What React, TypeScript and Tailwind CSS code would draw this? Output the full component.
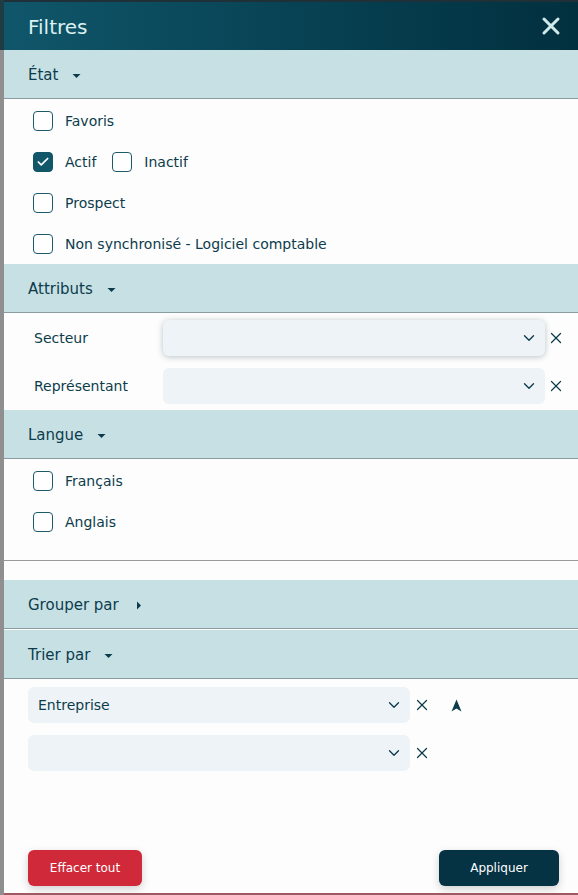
import { ChevronDown, X, Check } from 'lucide-react';

const FONT = { fontFamily: '"DejaVu Sans", Verdana, sans-serif' };

function Caret({ right }: { right?: boolean }) {
  return right ? (
    <svg width="6" height="9" viewBox="0 0 6 9" className="ml-[17px]">
      <path d="M1 0.5 L5 4.5 L1 8.5 Z" fill="#0c3c4c" />
    </svg>
  ) : (
    <svg width="9" height="6" viewBox="0 0 9 6" className="ml-[14px]">
      <path d="M0.5 1 L8.5 1 L4.5 5 Z" fill="#0c3c4c" />
    </svg>
  );
}

function SectionHeader({ title, open = true }: { title: string; open?: boolean }) {
  return (
    <div className="h-[49px] shrink-0 flex items-center pl-6 pt-[3px] bg-[#c7e0e4] border-b border-[#8a9ca2] text-[15px] text-[#0c3c4c]">
      <span>{title}</span>
      <Caret right={!open} />
    </div>
  );
}

function Box({ label, checked }: { label: string; checked?: boolean }) {
  return (
    <label className="flex items-center gap-3 h-[41px]">
      <span
        className={
          checked
            ? 'w-5 h-5 rounded-[4px] bg-[#12566a] border-[1.5px] border-[#12566a] flex items-center justify-center'
            : 'w-5 h-5 rounded-[4px] border-[1.5px] border-[#1d5a6c] bg-white'
        }
      >
        {checked && <Check size={14} strokeWidth={3} color="#ffffff" />}
      </span>
      <span className="text-[14px] text-[#0c3c4c] pt-[2px]">{label}</span>
    </label>
  );
}

function Select({ value, focused, className }: { value?: string; focused?: boolean; className?: string }) {
  return (
    <div
      className={
        'h-9 rounded-[6px] bg-[#eef3f7] flex items-center justify-between pl-[10px] pr-[7px] text-[14px] text-[#0c3c4c] ' +
        (focused ? 'shadow-[0_1px_6px_rgba(30,60,70,0.3)] ' : '') +
        (className || '')
      }
    >
      <span className="pt-[1px]">{value}</span>
      <ChevronDown size={18} strokeWidth={1.8} color="#0c3c4c" />
    </div>
  );
}

function Clear() {
  return <X size={18} strokeWidth={1.6} color="#0c3c4c" className="shrink-0" />;
}

export default function App() {
  return (
    <div className="flex h-[895px] w-[578px] overflow-hidden bg-white" style={FONT}>
      {/* background page peeking out */}
      <div className="w-[4px] shrink-0 flex flex-col">
        <div className="h-[50px] bg-[#1f3c44]" />
        <div className="flex-1 bg-[#8f8f8f]" />
      </div>

      <div className="flex-1 flex flex-col bg-[#fdfdfd]">
        {/* Header */}
        <div className="h-[50px] shrink-0 flex items-center justify-between pl-6 pr-[13px] border-t-2 border-[#1f3038] bg-gradient-to-r from-[#10566a] to-[#02303f]">
          <span className="text-[20px] text-[#dcf0f2] leading-none pt-[2px]">Filtres</span>
          <X size={28} strokeWidth={2.6} color="#d2e9ec" />
        </div>

        {/* État */}
        <SectionHeader title="État" />
        <div className="pl-[29px] pt-[1px]">
          <Box label="Favoris" />
          <div className="flex items-center gap-4">
            <Box label="Actif" checked />
            <Box label="Inactif" />
          </div>
          <Box label="Prospect" />
          <Box label="Non synchronisé - Logiciel comptable" />
        </div>

        {/* Attributs */}
        <SectionHeader title="Attributs" />
        <div className="pl-[30px] pr-[13px] pt-[7px] pb-[6px] flex flex-col gap-3">
          <div className="flex items-center">
            <span className="w-[129px] text-[14px] text-[#0c3c4c] pt-[1px]">Secteur</span>
            <Select focused className="flex-1 mr-[2px]" />
            <Clear />
          </div>
          <div className="flex items-center">
            <span className="w-[129px] text-[14px] text-[#0c3c4c] pt-[1px]">Représentant</span>
            <Select className="flex-1 mr-[2px]" />
            <Clear />
          </div>
        </div>

        {/* Langue */}
        <SectionHeader title="Langue" />
        <div className="pl-[29px] pt-[1px] h-[102px] border-b border-[#9a9a9a]">
          <Box label="Français" />
          <Box label="Anglais" />
        </div>

        {/* Grouper par */}
        <div className="mt-[19px]">
          <SectionHeader title="Grouper par" open={false} />
        </div>

        {/* Trier par */}
        <div className="mt-[1px]">
          <SectionHeader title="Trier par" />
        </div>
        <div className="pl-6 pt-2 flex flex-col gap-3">
          <div className="flex items-center">
            <Select value="Entreprise" className="w-[382px] mr-[3px]" />
            <Clear />
            <svg width="11" height="13" viewBox="0 0 11 13" className="ml-[20px]">
              <path d="M5.5 0.5 L10.5 12.5 L5.5 9.5 L0.5 12.5 Z" fill="#0c3c4c" />
            </svg>
          </div>
          <div className="flex items-center">
            <Select className="w-[382px] mr-[3px]" />
            <Clear />
          </div>
        </div>

        {/* Footer */}
        <div className="mt-auto flex items-center justify-between pl-6 pr-[19px] pb-[7px]">
          <button className="h-9 w-[114px] rounded-[6px] bg-[#cf293a] text-white text-[12px] shadow-[0_3px_8px_rgba(0,0,0,0.18)]">
            Effacer tout
          </button>
          <button className="h-9 w-[120px] rounded-[6px] bg-[#053344] text-white text-[12px] shadow-[0_3px_8px_rgba(0,0,0,0.18)]">
            Appliquer
          </button>
        </div>
        <div className="h-[2px] bg-[#a05862]" />
      </div>
    </div>
  );
}
